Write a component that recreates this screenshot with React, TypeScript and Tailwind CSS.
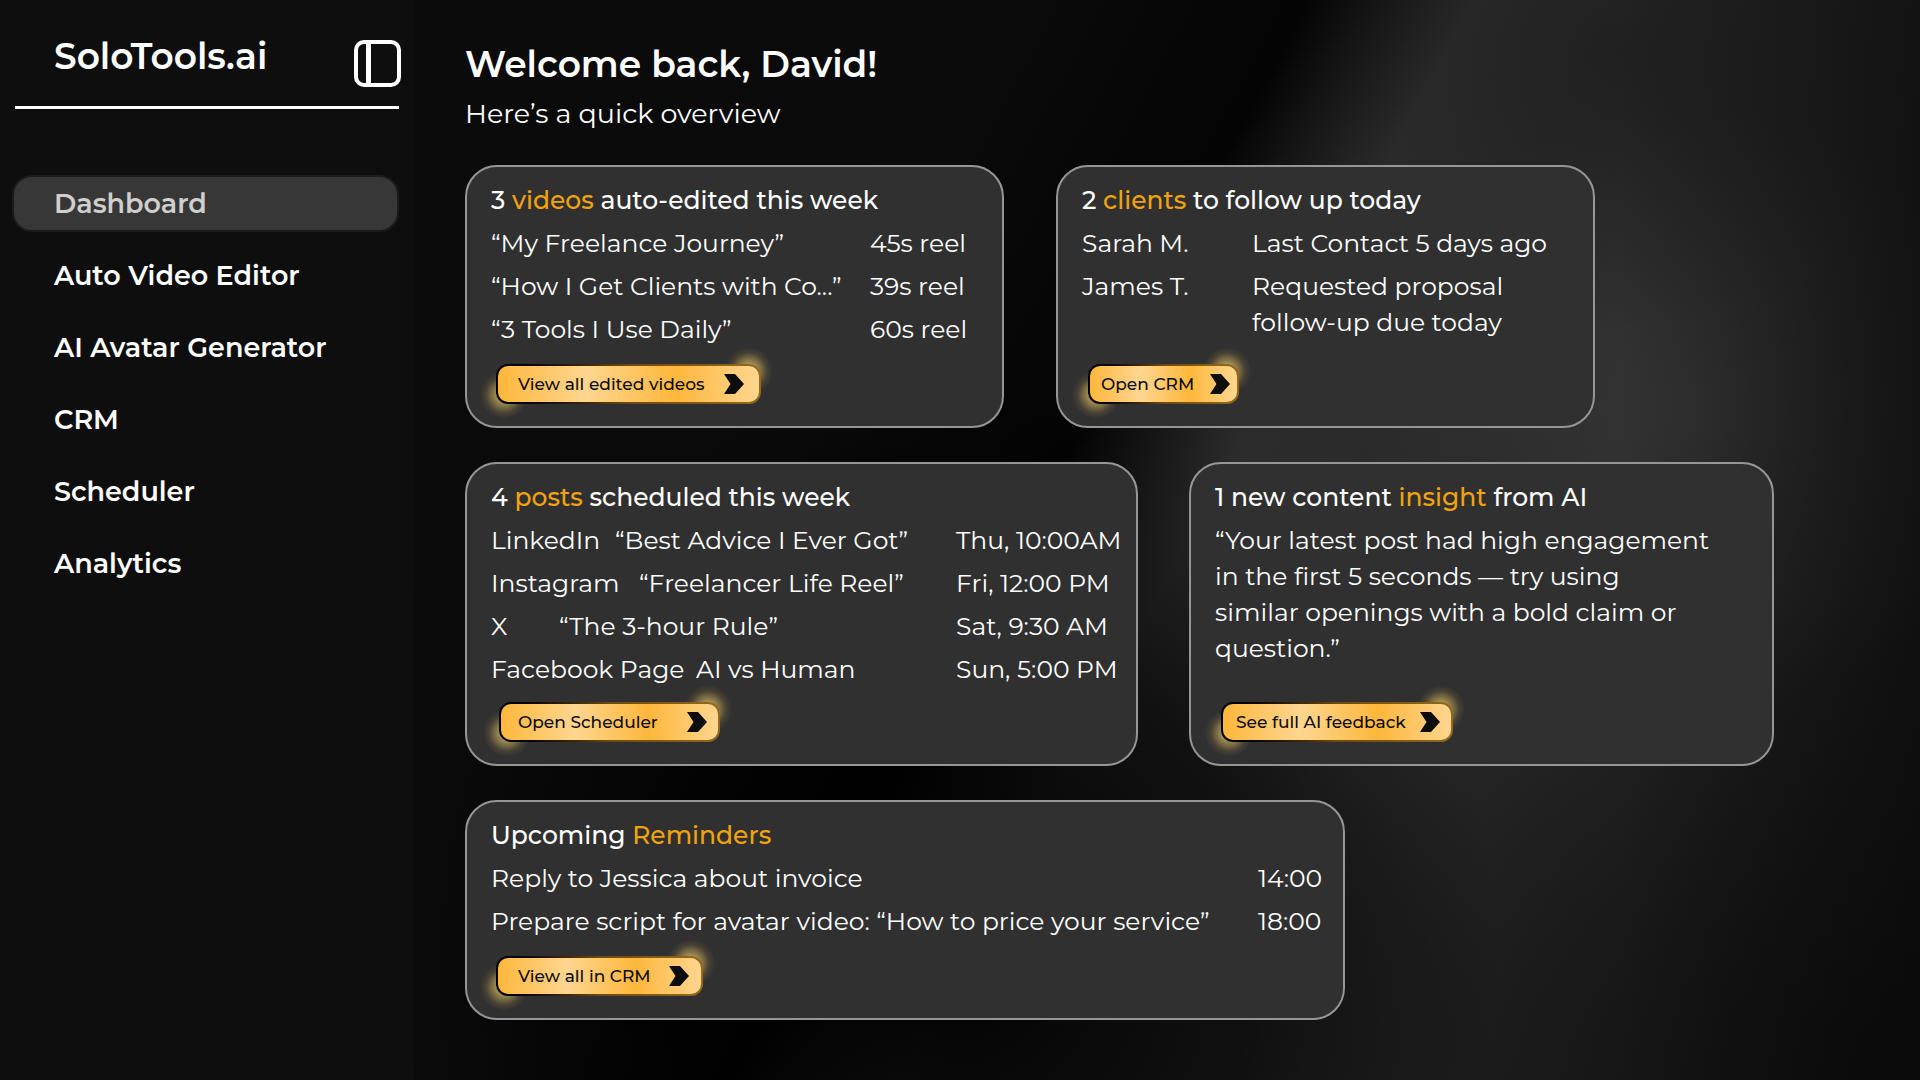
import React, { useState } from "react";

const NAV = ["Dashboard", "Auto Video Editor", "AI Avatar Generator", "CRM", "Scheduler", "Analytics"];

const BACKDROP =
  "bg-[linear-gradient(to_right,transparent_80%,rgba(8,8,8,0.65)_100%),radial-gradient(ellipse_50%_45%_at_100%_100%,rgba(5,5,5,0.65),transparent),radial-gradient(ellipse_36%_55%_at_36%_88%,rgba(0,0,0,0.95),rgba(0,0,0,0.6)_55%,transparent),radial-gradient(ellipse_20%_26%_at_80%_5%,rgba(10,10,10,0.3),transparent),radial-gradient(ellipse_22%_28%_at_85%_38%,rgba(66,66,66,0.5),transparent),linear-gradient(118deg,#0b0b0b_0%,#0a0a0a_30%,#040404_43%,#141414_46%,#2c2c2c_51%,#282828_68%,#1c1c1c_100%)]";

const GLOW =
  "absolute size-12 rounded-full bg-[radial-gradient(closest-side,rgba(255,226,120,0.85)_0%,rgba(240,205,105,0.5)_40%,rgba(225,180,80,0.14)_75%,transparent_100%)]";

function Accent({ children }: { children: React.ReactNode }) {
  return <span className="text-[#f0a30f]">{children}</span>;
}

function GlowButton({ label, className = "" }: { label: string; className?: string }) {
  return (
    <div className={`relative mt-auto h-10 ${className}`}>
      <span className={`${GLOW} -bottom-4 -left-4`} />
      <span className={`${GLOW} -top-4 -right-3`} />
      <button
        type="button"
        className="relative h-full w-full cursor-pointer rounded-xl bg-linear-to-r from-black via-[#6b4a10] to-[#94691a] p-0.5 text-[17px] font-medium text-[#0c0c0c]"
      >
        <span className="flex h-full items-center justify-between rounded-[10px] bg-[linear-gradient(90deg,#ffb73b_0%,#ffd690_34%,#ffb73b_68%,#ffd690_100%)] pr-[var(--end)] pl-[var(--start)] whitespace-nowrap">
          {label}
          <svg width="20" height="20" viewBox="0 0 20 20" fill="#0d0d0d" aria-hidden="true">
            <path d="M0 0h11l9 10-9 10H0l6.5-10z" />
          </svg>
        </span>
      </button>
    </div>
  );
}

function Card({ title, className, children }: { title: React.ReactNode; className: string; children: React.ReactNode }) {
  return (
    <section
      className={`flex flex-col rounded-[32px] border-2 border-[#969696] bg-[#303030] pt-[15px] pr-3 pb-[23px] pl-6 ${className}`}
    >
      <h2 className="mb-[7px] font-medium">{title}</h2>
      {children}
    </section>
  );
}

const VIDEOS = [
  ["“My Freelance Journey”", "45s reel"],
  ["“How I Get Clients with Co...”", "39s reel"],
  ["“3 Tools I Use Daily”", "60s reel"],
];

const POSTS = [
  ["LinkedIn", "“Best Advice I Ever Got”", "Thu, 10:00AM", "w-[124px]"],
  ["Instagram", "“Freelancer Life Reel”", "Fri, 12:00 PM", "w-[148px]"],
  ["X", "“The 3-hour Rule”", "Sat, 9:30 AM", "w-[68px]"],
  ["Facebook Page", "AI vs Human", "Sun, 5:00 PM", "w-[205px]"],
];

const REMINDERS = [
  ["Reply to Jessica about invoice", "14:00"],
  ["Prepare script for avatar video: “How to price your service”", "18:00"],
];

export default function App() {
  const [active, setActive] = useState("Dashboard");
  return (
    <div className="flex min-h-screen bg-[#060606] font-['Montserrat','Inter',sans-serif] text-[25px] leading-9 text-white">
      <aside className="w-[414px] shrink-0 bg-[#0e0e0e]">
        <header className="mr-[15px] ml-[15px] flex h-[109px] items-start justify-between border-b-3 border-white pl-[39px]">
          <span className="pt-[38px] text-[36px] font-semibold">SoloTools.ai</span>
          <button type="button" aria-label="Toggle sidebar" className="mt-10 -mr-0.5 cursor-pointer">
            <svg width="47" height="47" viewBox="0 0 47 47" fill="none" stroke="white" strokeWidth="4">
              <rect x="2" y="2" width="43" height="43" rx="8" />
              <path d="M14.5 2v43" strokeWidth="5" />
            </svg>
          </button>
        </header>
        <nav className="mt-[66px] mr-[15px] ml-3 flex flex-col gap-[15px]">
          {NAV.map((n) => (
            <a
              key={n}
              href="#"
              onClick={() => setActive(n)}
              className={`flex h-[57px] items-center rounded-[20px] border-2 pl-10 text-[27px] font-semibold ${
                n === active ? "border-[#1c1c1c] bg-[#373737] text-[#cfcfcf]" : "border-transparent"
              }`}
            >
              {n}
            </a>
          ))}
        </nav>
      </aside>

      <main className={`min-w-0 flex-1 pt-10 pl-[51px] ${BACKDROP}`}>
        <h1 className="text-[36px] leading-[48px] font-semibold">Welcome back, David!</h1>
        <p className="mt-2 text-[27px]">Here’s a quick overview</p>

        <div className="mt-[33px] flex flex-col gap-[34px]">
          <div className="flex gap-[52px]">
            <Card className="min-h-[263px] w-[539px]" title={<>3 <Accent>videos</Accent> auto-edited this week</>}>
              <ul className="mb-3.5 flex flex-col gap-[7px]">
                {VIDEOS.map(([name, len]) => (
                  <li key={name} className="flex">
                    <span className="w-[379px]">{name}</span>
                    <span>{len}</span>
                  </li>
                ))}
              </ul>
              <GlowButton label="View all edited videos" className="ml-[5px] w-[265px] [--end:15px] [--start:20px]" />
            </Card>
            <Card className="min-h-[263px] w-[539px]" title={<>2 <Accent>clients</Accent> to follow up today</>}>
              <dl className="mb-3.5 grid grid-cols-[170px_1fr] gap-y-[7px]">
                <dt>Sarah M.</dt>
                <dd>Last Contact 5 days ago</dd>
                <dt>James T.</dt>
                <dd>Requested proposal<br />follow-up due today</dd>
              </dl>
              <GlowButton label="Open CRM" className="ml-[6px] w-[151px] [--end:7px] [--start:11px]" />
            </Card>
          </div>

          <div className="flex gap-[51px]">
            <Card className="min-h-[304px] w-[673px]" title={<>4 <Accent>posts</Accent> scheduled this week</>}>
              <ul className="mb-3.5 flex flex-col gap-[7px]">
                {POSTS.map(([site, name, time, w]) => (
                  <li key={site} className="flex whitespace-nowrap">
                    <span className="flex w-[465px]">
                      <span className={`shrink-0 ${w}`}>{site}</span>
                      <span>{name}</span>
                    </span>
                    <span>{time}</span>
                  </li>
                ))}
              </ul>
              <GlowButton label="Open Scheduler" className="ml-2 w-[221px] [--end:11px] [--start:17px]" />
            </Card>
            <Card className="min-h-[304px] w-[585px]" title={<>1 new content <Accent>insight</Accent> from AI</>}>
              <p>
                “Your latest post had high engagement<br />in the first 5 seconds — try using<br />similar openings with a bold claim or<br />question.”
              </p>
              <GlowButton label="See full AI feedback" className="ml-[6px] w-[232px] [--end:11px] [--start:13px]" />
            </Card>
          </div>

          <Card className="min-h-[220px] w-[880px]" title={<>Upcoming <Accent>Reminders</Accent></>}>
            <ul className="mb-3.5 flex flex-col gap-[7px]">
              {REMINDERS.map(([task, time]) => (
                <li key={task} className="flex">
                  <span className="w-[767px]">{task}</span>
                  <span>{time}</span>
                </li>
              ))}
            </ul>
            <GlowButton label="View all in CRM" className="ml-[5px] w-[207px] [--end:12px] [--start:20px]" />
          </Card>
        </div>
      </main>
    </div>
  );
}
